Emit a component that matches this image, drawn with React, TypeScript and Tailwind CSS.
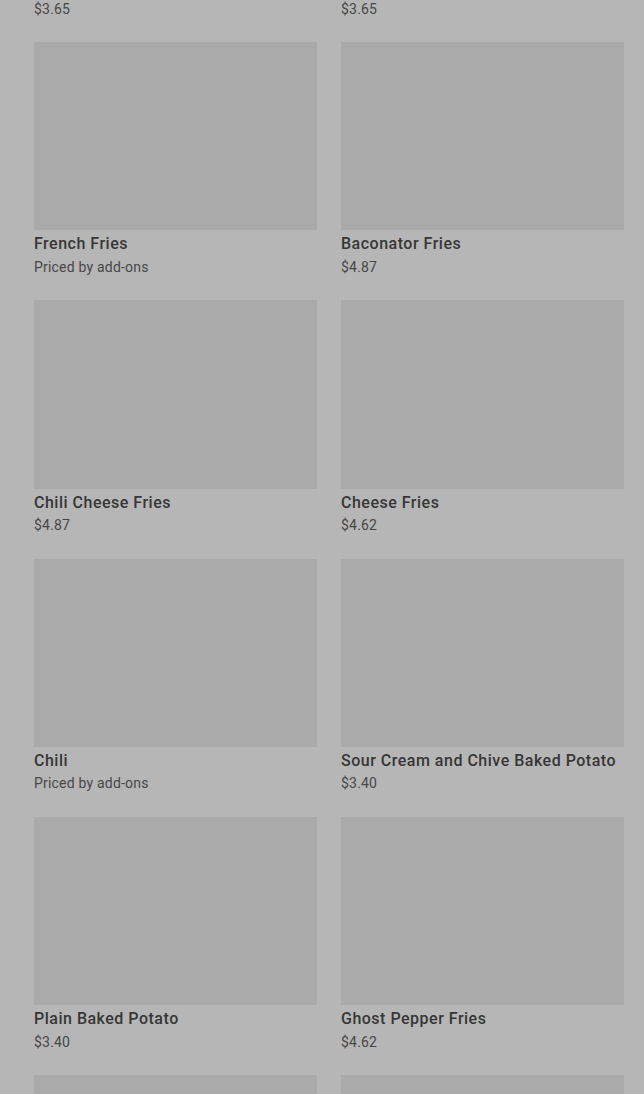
import React from 'react';

type Item = { name: string; price: string };

const items: Item[] = [
  { name: 'French Fries', price: 'Priced by add-ons' },
  { name: 'Baconator Fries', price: '$4.87' },
  { name: 'Chili Cheese Fries', price: '$4.87' },
  { name: 'Cheese Fries', price: '$4.62' },
  { name: 'Chili', price: 'Priced by add-ons' },
  { name: 'Sour Cream and Chive Baked Potato', price: '$3.40' },
  { name: 'Plain Baked Potato', price: '$3.40' },
  { name: 'Ghost Pepper Fries', price: '$4.62' },
];

const MenuCard: React.FC<{ item: Item }> = ({ item }) => (
  <div className="flex flex-col">
    <div className="h-[188.25px] w-full bg-[#aaaaaa]" />
    <div className="mt-[4px] text-[16px] leading-5 font-medium tracking-[0.5px] text-[#363636]">{item.name}</div>
    <div className="mt-[2.5px] text-[14px] leading-5 tracking-[0.2px] text-[#474747]">{item.price}</div>
  </div>
);

const App: React.FC = () => {
  return (
    <div
      className="min-h-screen bg-[#b6b6b6] px-[34px] pr-[20px] overflow-hidden"
      style={{ fontFamily: 'Roboto, "Liberation Sans", sans-serif' }}
    >
      <div className="grid grid-cols-2 gap-x-6 -mt-[1px]">
        <div className="text-[14px] leading-5 tracking-[0.2px] text-[#474747]">$3.65</div>
        <div className="text-[14px] leading-5 tracking-[0.2px] text-[#474747]">$3.65</div>
      </div>
      <div className="grid grid-cols-2 gap-x-6 gap-y-[23.5px] mt-[23px]">
        {items.map((item) => (
          <MenuCard key={item.name} item={item} />
        ))}
        <div className="h-[188.25px] w-full bg-[#aaaaaa]" />
        <div className="h-[188.25px] w-full bg-[#aaaaaa]" />
      </div>
    </div>
  );
};

export default App;
